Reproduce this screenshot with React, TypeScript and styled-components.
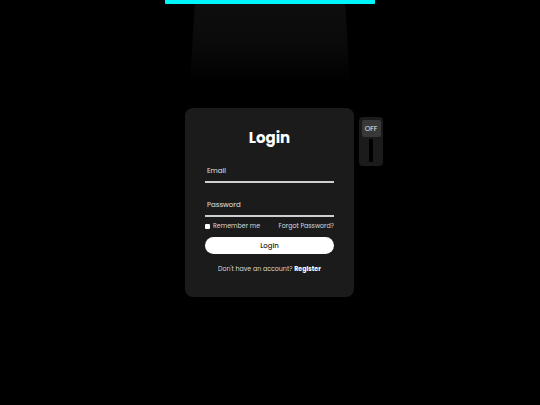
import styled, { createGlobalStyle } from "styled-components";

const GlobalStyle = createGlobalStyle`
  * { box-sizing: border-box; }
  body {
    margin: 0;
    background: #000;
    font-family: "Poppins", "Open Sans", "DejaVu Sans", sans-serif;
    color: #fff;
  }
`;

const Page = styled.div`
  width: 540px;
  height: 405px;
  display: flex;
  flex-direction: column;
  align-items: center;
`;

const Lamp = styled.div`
  width: 210px;
  height: 4px;
  background: #00f5fb;
  border-radius: 0 0 1px 1px;
`;

const Beam = styled.div`
  width: 160px;
  height: 80px;
  background: linear-gradient(#0e0e0e 0%, #0a0a0a 50%, #000 100%);
  clip-path: polygon(3% 0, 97% 0, 100% 100%, 0 100%);
`;

const CardWrap = styled.div`
  position: relative;
  margin-top: 24px;
  margin-right: 1px;
`;

const Card = styled.form`
  width: 169px;
  height: 189px;
  background: #1b1b1b;
  border-radius: 8px;
  padding: 21px 20px 0;
  display: flex;
  flex-direction: column;
`;

const Title = styled.h1`
  margin: 0;
  font-size: 15px;
  line-height: 18px;
  font-weight: 700;
  text-align: center;
  color: #fff;
`;

const Field = styled.label<{ $gap: number }>`
  display: block;
  margin-top: ${(p) => p.$gap}px;
  height: 20px;
  padding: 3px 2px 0;
  border-bottom: 2px solid #cfcfcf;
  font-size: 7px;
  line-height: 10px;
  color: #e2e2e2;
`;

const OptionsRow = styled.div`
  margin-top: 4px;
  display: flex;
  justify-content: space-between;
  align-items: center;
  height: 10px;
  font-size: 6.3px;
  color: #d8d8d8;
`;

const Remember = styled.span`
  display: flex;
  align-items: center;
  gap: 3px;
`;

const Check = styled.span`
  width: 5px;
  height: 5px;
  background: #fff;
  border-radius: 1px;
`;

const SubmitButton = styled.button`
  margin-top: 6px;
  height: 17px;
  width: 100%;
  border: none;
  border-radius: 9px;
  background: #fff;
  color: #222;
  font-family: inherit;
  font-size: 7px;
  font-weight: 500;
  padding: 0;
`;

const RegisterText = styled.p`
  margin: 10px 0 0;
  font-size: 6.3px;
  line-height: 10px;
  text-align: center;
  color: #d8d8d8;

  b {
    color: #fff;
    font-weight: 700;
  }
`;

const Switch = styled.div`
  position: absolute;
  top: 9px;
  left: calc(100% + 5px);
  width: 24px;
  height: 49px;
  background: #1b1b1b;
  border-radius: 4px;
  padding: 3px;
  display: flex;
  flex-direction: column;
  align-items: center;
  gap: 2px;
`;

const Knob = styled.div`
  width: 19px;
  height: 17px;
  background: #383838;
  border-radius: 2px;
  display: flex;
  align-items: center;
  justify-content: center;
  font-size: 7px;
  color: #e6e6e6;
`;

const Track = styled.div`
  width: 4px;
  height: 23px;
  background: #000;
`;

export default function App() {
  return (
    <>
      <GlobalStyle />
      <Page>
        <Lamp />
        <Beam />
        <CardWrap>
          <Card onSubmit={(e) => e.preventDefault()}>
            <Title>Login</Title>
            <Field $gap={16}>Email</Field>
            <Field $gap={14}>Password</Field>
            <OptionsRow>
              <Remember>
                <Check />
                Remember me
              </Remember>
              <span>Forgot Password?</span>
            </OptionsRow>
            <SubmitButton type="submit">Login</SubmitButton>
            <RegisterText>
              Don't have an account? <b>Register</b>
            </RegisterText>
          </Card>
          <Switch>
            <Knob>OFF</Knob>
            <Track />
          </Switch>
        </CardWrap>
      </Page>
    </>
  );
}
